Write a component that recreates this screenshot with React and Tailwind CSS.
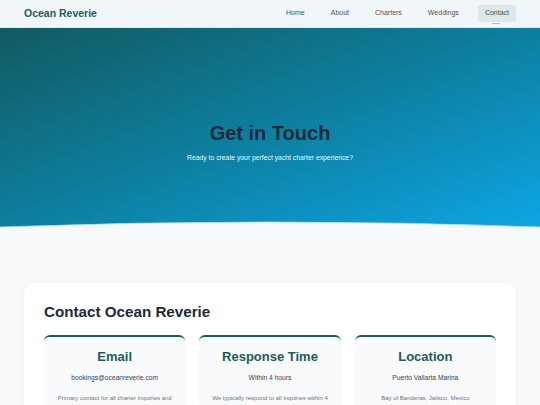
export default function App() {
  const links = ["Home", "About", "Charters", "Weddings"];
  const cards = [
    {
      title: "Email",
      value: "bookings@oceanreverie.com",
      text: "Primary contact for all charter inquiries and bookings. Include your preferred dates and group size.",
    },
    {
      title: "Response Time",
      value: "Within 4 hours",
      text: "We typically respond to all inquiries within 4 hours during business hours, Monday through Saturday.",
    },
    {
      title: "Location",
      value: "Puerto Vallarta Marina",
      text: "Bay of Banderas, Jalisco, Mexico",
    },
  ];

  return (
    <div
      className="min-h-screen bg-[#f8f9fa]"
      style={{ fontFamily: '"Liberation Sans", Arial, sans-serif' }}
    >
      <nav className="h-[28px] bg-[#f1f6f8] border-b border-[#dfe9ec] flex items-center justify-between px-[24px]">
        <div className="text-[10.5px] font-bold text-[#1e5b5e] pt-[1px]">Ocean Reverie</div>
        <div className="flex items-center gap-[12px] text-[7px] text-[#4b5563]">
          {links.map((l) => (
            <span key={l} className="px-[7px] py-[3px]">
              {l}
            </span>
          ))}
          <span className="relative px-[7px] py-[3px] rounded-[3px] bg-[#dce8ea] text-[#1e5b5e]">
            Contact
            <span className="absolute left-[14px] bottom-[-2px] w-[8px] h-[1px] bg-[#e5b865]" />
          </span>
        </div>
      </nav>

      <section className="relative h-[200px] bg-linear-to-br from-[#115a62] via-[#0d7f9f] to-[#0ea5e4] flex flex-col items-center pt-[93px]">
        <h1 className="text-[20px] leading-[24px] font-bold text-[#1b2a3a]">Get in Touch</h1>
        <p className="mt-[8px] text-[6.8px] leading-[10px] text-[#e6f6fb]">
          Ready to create your perfect yacht charter experience?
        </p>
        <svg
          className="absolute left-0 bottom-0 w-full h-[8px]"
          viewBox="0 0 540 8"
          preserveAspectRatio="none"
        >
          <path d="M0 7 Q270 -3 540 7 L540 8 L0 8 Z" fill="#f8f9fa" />
          <path d="M0 7 Q270 -3 540 7" fill="none" stroke="#9fe3f7" strokeWidth="0.8" />
        </svg>
      </section>

      <main className="px-[24px] pt-[55px]">
        <div className="bg-white rounded-[10px] shadow-[0_2px_10px_rgba(0,0,0,0.05)] px-[20px] pt-[20px] pb-[20px]">
          <h2 className="text-[15.2px] leading-[18px] font-bold text-[#1f2937] mb-[14px]">
            Contact Ocean Reverie
          </h2>
          <div className="grid grid-cols-3 gap-[14px]">
            {cards.map((c) => (
              <div
                key={c.title}
                className="bg-[#f8fafc] rounded-[6px] border-t-2 border-[#1e5b5e] px-[12px] pt-[12px] pb-[14px] text-center"
              >
                <h3 className="text-[13px] leading-[16px] font-bold text-[#1e5b5e]">{c.title}</h3>
                <p className="mt-[8px] text-[6.7px] leading-[10px] text-[#374151]">{c.value}</p>
                <p className="mt-[10px] text-[6px] leading-[10px] text-[#6b7280]">{c.text}</p>
              </div>
            ))}
          </div>
        </div>
      </main>
    </div>
  );
}
